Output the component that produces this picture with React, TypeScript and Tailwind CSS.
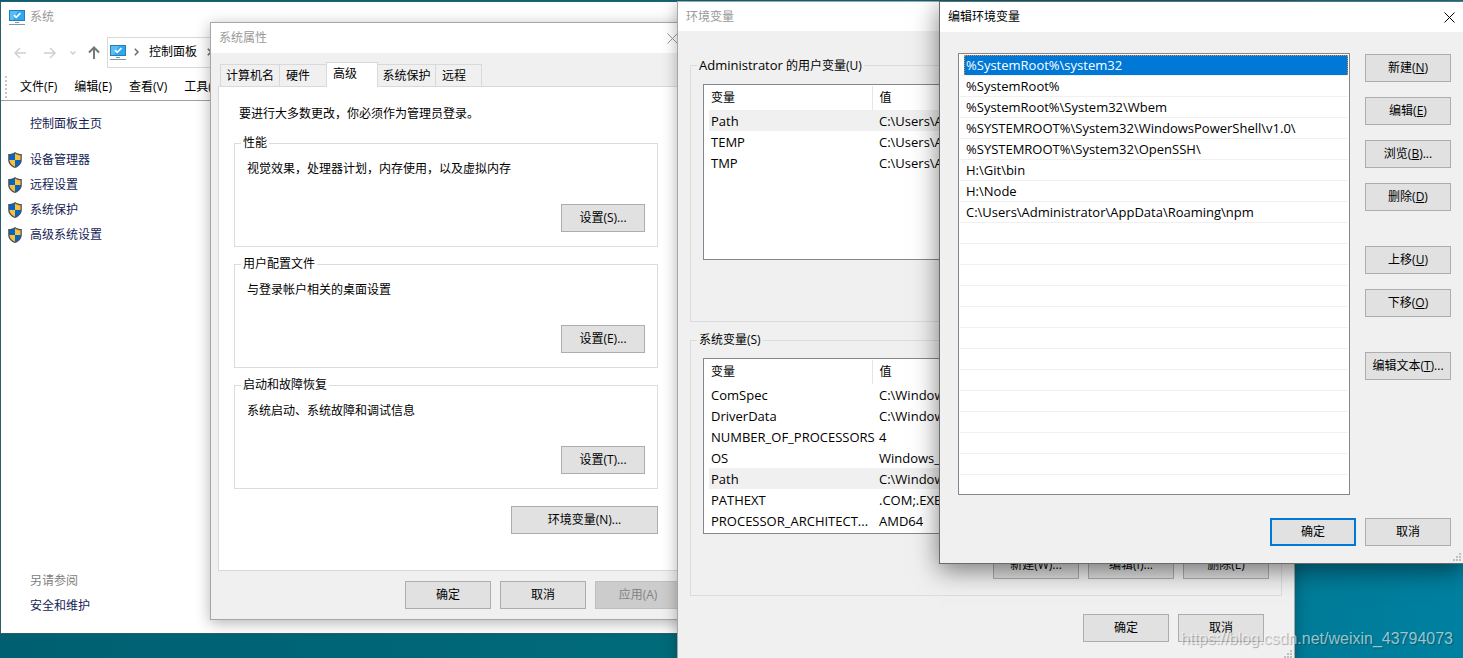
import React from 'react';

interface Variable {
  name: string;
  value: string;
  selected?: boolean;
}

const userVariables: Variable[] = [
  { name: 'Path', value: 'C:\\Users\\Administrator\\AppData', selected: true },
  { name: 'TEMP', value: 'C:\\Users\\Administrator\\AppData' },
  { name: 'TMP', value: 'C:\\Users\\Administrator\\AppData' },
];

const systemVariables: Variable[] = [
  { name: 'ComSpec', value: 'C:\\Windows\\system32\\cmd.exe' },
  { name: 'DriverData', value: 'C:\\Windows\\System32\\Drivers' },
  { name: 'NUMBER_OF_PROCESSORS', value: '4' },
  { name: 'OS', value: 'Windows_NT' },
  { name: 'Path', value: 'C:\\Windows\\system32', selected: true },
  { name: 'PATHEXT', value: '.COM;.EXE;.BAT;.CMD' },
  { name: 'PROCESSOR_ARCHITECT...', value: 'AMD64' },
];

const pathEntries = [
  '%SystemRoot%\\system32',
  '%SystemRoot%',
  '%SystemRoot%\\System32\\Wbem',
  '%SYSTEMROOT%\\System32\\WindowsPowerShell\\v1.0\\',
  '%SYSTEMROOT%\\System32\\OpenSSH\\',
  'H:\\Git\\bin',
  'H:\\Node',
  'C:\\Users\\Administrator\\AppData\\Roaming\\npm',
];

const emptyRows = Array.from({ length: 12 }, (_, i) => i);

const sideLinks = ['设备管理器', '远程设置', '系统保护', '高级系统设置'];

const settingGroups = [
  { title: '性能', text: '视觉效果，处理器计划，内存使用，以及虚拟内存', button: '设置(S)...' },
  { title: '用户配置文件', text: '与登录帐户相关的桌面设置', button: '设置(E)...' },
  { title: '启动和故障恢复', text: '系统启动、系统故障和调试信息', button: '设置(T)...' },
];

interface WinButtonProps {
  children: React.ReactNode;
  className?: string;
  primary?: boolean;
  disabled?: boolean;
}

const WinButton: React.FC<WinButtonProps> = ({ children, className = 'w-[86px]', primary, disabled }) => {
  const look = disabled
    ? 'border border-[#bfbfbf] bg-[#cccccc] text-[#838383]'
    : primary
      ? 'border-2 border-[#0078d7] bg-[#e1e1e1]'
      : 'border border-[#adadad] bg-[#e1e1e1]';
  return (
    <button type="button" disabled={disabled} className={`h-7 shrink-0 whitespace-nowrap text-center leading-4 ${look} ${className}`}>
      {children}
    </button>
  );
};

const MonitorIcon = () => (
  <svg width="16" height="16" viewBox="0 0 16 16" className="shrink-0">
    <rect x="0.5" y="1.5" width="15" height="10" fill="#2ea8f5" stroke="#2b7cb0" />
    <path d="M1 2h8L4 11H1z" fill="#55bdf8" />
    <path d="M5 6.2l2.2 2.2L11.5 4" fill="none" stroke="#fff" strokeWidth="1.7" />
    <path d="M6 13.500h4" stroke="#7d97a8" />
    <path d="M0 15.500h16" stroke="#8298a8" />
  </svg>
);

const ShieldIcon = () => (
  <svg width="14" height="16" viewBox="0 0 14 16" className="shrink-0">
    <path d="M7 0C5 1.400 3 2 .2 2.100V8c0 3.600 2.700 6.600 6.800 8 4.100-1.400 6.800-4.400 6.800-8V2.100C11 2 9 1.400 7 0z" fill="#4d5258" />
    <path d="M7 1.400C5.300 2.600 3.500 3.100 1.500 3.300V8H7z" fill="#0066cc" />
    <path d="M7 1.400c1.700 1.200 3.500 1.700 5.500 1.900V8H7z" fill="#fdc035" />
    <path d="M1.500 8c.1 3 2.200 5.400 5.500 6.700V8z" fill="#fdc035" />
    <path d="M12.500 8c-.1 3-2.200 5.400-5.500 6.700V8z" fill="#0066cc" />
  </svg>
);

const CloseIcon = () => (
  <svg width="11" height="11" viewBox="0 0 11 11" fill="none" stroke="currentColor">
    <path d="M.5.5l10 10M10.500.5l-10 10" />
  </svg>
);

const Chevron = () => (
  <svg width="5" height="8" viewBox="0 0 5 8" fill="none" stroke="#6b6b6b" strokeWidth="1.5" className="shrink-0">
    <path d="M.8.8L4 4 .8 7.200" />
  </svg>
);

const SizeGrip = () => (
  <svg width="8" height="8" viewBox="0 0 8 8" fill="#bfbfbf" className="absolute bottom-[2px] right-[2px]">
    <path d="M6 0h2v2H6zM3 3h2v2H3zM6 3h2v2H6zM0 6h2v2H0zM3 6h2v2H3zM6 6h2v2H6z" />
  </svg>
);

const SystemWindow = () => (
  <section className="absolute bottom-6 left-0 top-px flex w-[900px] flex-col border border-[#2b5f6b] bg-white">
    <div className="flex h-[30px] items-center gap-[5px] pl-2 text-[#999999]">
      <MonitorIcon />
      <h2>系统</h2>
    </div>

    <div className="mt-[5px] flex h-[31px]">
      <div className="flex w-[106px] shrink-0 items-center pl-[13px]">
        <svg width="12" height="12" viewBox="0 0 12 12" fill="none" stroke="#d0d0d0" strokeWidth="1.5">
          <path d="M12 6H1M6 1L1 6l5 5" />
        </svg>
        <svg width="12" height="12" viewBox="0 0 12 12" fill="none" stroke="#d0d0d0" strokeWidth="1.5" className="ml-[18px]">
          <path d="M0 6h11M6 1l5 5-5 5" />
        </svg>
        <svg width="6" height="4" viewBox="0 0 6 4" fill="none" stroke="#d0d0d0" strokeWidth="1.5" className="ml-[14px]">
          <path d="M.5.5L3 3 5.500.5" />
        </svg>
        <svg width="12" height="13" viewBox="0 0 12 13" fill="none" stroke="#777777" strokeWidth="2" className="ml-[12px]">
          <path d="M6 13V2M1 6.500l5-5 5 5" />
        </svg>
      </div>
      <div className="flex grow items-center border border-[#d9d9d9] pb-[2px] pl-[2px]">
        <MonitorIcon />
        <span className="ml-2"><Chevron /></span>
        <span className="ml-[10px] mr-[10px]">控制面板</span>
        <Chevron />
      </div>
    </div>

    <nav className="flex h-[33px] items-center border-b border-[#a0a0a0] pl-1 pt-[6px]">
      <span className="h-[22px] border-l-2 border-dotted border-[#c8c8c8]" />
      <div className="ml-[13px] flex gap-[17px]">
        <button type="button">文件(F)</button>
        <button type="button">编辑(E)</button>
        <button type="button">查看(V)</button>
        <button type="button">工具(T)</button>
      </div>
    </nav>

    <aside className="flex grow flex-col pb-[19px] pl-[7px] pt-[15px] text-[#151c55]">
      <a href="#home" className="pl-[22px]">控制面板主页</a>
      <ul className="mt-5 flex flex-col gap-[9px]">
        {sideLinks.map((label) => (
          <li key={label} className="flex items-center gap-2">
            <ShieldIcon />
            <a href="#side">{label}</a>
          </li>
        ))}
      </ul>
      <div className="mt-auto flex flex-col gap-[9px] pl-[22px]">
        <span className="text-[#808080]">另请参阅</span>
        <a href="#security">安全和维护</a>
      </div>
    </aside>
  </section>
);

const PropertiesWindow = () => (
  <section className="absolute left-[210px] top-[22px] w-[479px] border border-[#a6a6a6] bg-[#f0f0f0] shadow-[0_3px_14px_rgba(0,0,0,0.3)]">
    <div className="flex h-[30px] items-center bg-white pl-2 text-[#999999]">
      <h2>系统属性</h2>
      <button type="button" aria-label="关闭" className="ml-auto mr-[10px]">
        <CloseIcon />
      </button>
    </div>

    <div className="px-[7px] pb-[10px] pt-[9px]">
      <div className="flex items-end pl-[2px]" role="tablist">
        <button type="button" role="tab" className="h-[22px] w-[60px] border border-b-0 border-[#d9d9d9]">计算机名</button>
        <button type="button" role="tab" className="h-[22px] w-[46px] border-t border-[#d9d9d9] pl-[6px] text-left">硬件</button>
        <button type="button" role="tab" aria-selected="true" className="-mb-px h-[25px] w-[52px] border border-b-0 border-[#d9d9d9] bg-white pb-[2px] pl-[6px] text-left">高级</button>
        <button type="button" role="tab" className="h-[22px] w-[58px] border-r border-t border-[#d9d9d9]">系统保护</button>
        <button type="button" role="tab" className="h-[22px] w-[46px] border-r border-t border-[#d9d9d9] pl-[6px] text-left">远程</button>
      </div>

      <div className="border border-[#d9d9d9] bg-white pb-9 pl-[15px] pr-[22px] pt-[19px]">
        <p className="ml-[5px]">要进行大多数更改，你必须作为管理员登录。</p>
        <div className="mt-[13px] flex flex-col gap-[9px]">
          {settingGroups.map((group) => (
            <fieldset key={group.title} className="border border-[#dcdcdc] pb-[14px] pr-3">
              <legend className="ml-[6px] px-[2px]">{group.title}</legend>
              <p className="pl-3 pt-[10px]">{group.text}</p>
              <div className="mt-[27px] flex justify-end">
                <WinButton className="w-[84px]">{group.button}</WinButton>
              </div>
            </fieldset>
          ))}
        </div>
        <div className="mt-[17px] flex justify-end">
          <WinButton className="w-[147px]">环境变量(N)...</WinButton>
        </div>
      </div>

      <div className="mt-[10px] flex justify-end gap-[9px]">
        <WinButton>确定</WinButton>
        <WinButton>取消</WinButton>
        <WinButton disabled>应用(A)</WinButton>
      </div>
    </div>
  </section>
);

const VariableTable: React.FC<{ rows: Variable[] }> = ({ rows }) => (
  <div className="h-[176px] overflow-hidden border border-[#828790] bg-white pl-[5px] pt-px">
    <table className="w-full table-fixed border-collapse">
      <thead>
        <tr className="h-[24px]">
          <th className="w-[163px] border-r border-[#e5e5e5] p-0 pl-[2px] text-left font-normal">变量</th>
          <th className="p-0 pl-[7px] text-left font-normal">值</th>
        </tr>
      </thead>
      <tbody className="text-[13px]">
        {rows.map((row) => (
          <tr key={row.name} className={row.selected ? 'h-[21px] bg-[#f0f0f0]' : 'h-[21px]'}>
            <td className="whitespace-nowrap p-0 pl-[2px]">{row.name}</td>
            <td className="whitespace-nowrap p-0 pl-[7px]">{row.value}</td>
          </tr>
        ))}
      </tbody>
    </table>
  </div>
);

const VariablesWindow = () => (
  <section className="absolute left-[677px] top-px w-[618px] border border-[#a6a6a6] bg-[#f0f0f0] shadow-[0_3px_14px_rgba(0,0,0,0.3)]">
    <div className="flex h-[29px] items-center bg-white pl-2 text-[#999999]">
      <h2>环境变量</h2>
    </div>

    <div className="px-3 pb-[18px] pt-[26px]">
      <fieldset className="border border-[#dcdcdc] px-3 pb-[18px]">
        <legend className="-ml-[6px] px-[2px]">
          <span className="text-[13px]">Administrator</span> 的用户变量(U)
        </legend>
        <div className="pt-[10px]">
          <VariableTable rows={userVariables} />
        </div>
        <div className="mt-[15px] flex justify-end gap-[9px]">
          <WinButton>新建(N)...</WinButton>
          <WinButton>编辑(E)...</WinButton>
          <WinButton>删除(D)</WinButton>
        </div>
      </fieldset>

      <fieldset className="mt-[10px] border border-[#dcdcdc] px-3 pb-4">
        <legend className="-ml-[6px] px-[2px]">系统变量(S)</legend>
        <div className="pt-[10px]">
          <VariableTable rows={systemVariables} />
        </div>
        <div className="mt-[17px] flex justify-end gap-[9px]">
          <WinButton>新建(W)...</WinButton>
          <WinButton>编辑(I)...</WinButton>
          <WinButton>删除(L)</WinButton>
        </div>
      </fieldset>

      <div className="mt-[18px] flex justify-end gap-[9px] pr-[18px]">
        <WinButton>确定</WinButton>
        <WinButton>取消</WinButton>
      </div>
    </div>
    <SizeGrip />
  </section>
);

const EditWindow = () => (
  <section className="absolute left-[939px] top-px w-[525px] border border-[#6b6b6b] bg-[#f0f0f0] shadow-[0_6px_24px_rgba(0,0,0,0.5)]">
    <div className="flex h-[30px] items-center bg-white pl-2">
      <h2>编辑环境变量</h2>
      <button type="button" aria-label="关闭" className="ml-auto mr-2">
        <CloseIcon />
      </button>
    </div>

    <div className="pb-[17px] pl-[18px] pr-3 pt-[21px]">
      <div className="flex gap-[15px]">
        <ul className="h-[442px] grow overflow-hidden border border-[#828790] bg-white p-px text-[13px]">
          {pathEntries.map((entry, i) => (
            <li key={entry} className="flex h-[21px] border-b border-[#f0f0f0] pl-1">
              <span
                className={
                  i === 0
                    ? 'flex grow items-center border border-b-0 border-dotted border-[#ff8728] bg-[#0078d7] pb-px pl-px text-white'
                    : 'flex grow items-center pl-[2px]'
                }
              >
                {entry}
              </span>
            </li>
          ))}
          {emptyRows.map((row) => (
            <li key={row} className="h-[21px] border-b border-[#f0f0f0]" />
          ))}
        </ul>

        <div className="flex flex-col gap-[15px] pt-px">
          <WinButton>新建(<u>N</u>)</WinButton>
          <WinButton>编辑(<u>E</u>)</WinButton>
          <WinButton>浏览(<u>B</u>)...</WinButton>
          <WinButton>删除(<u>D</u>)</WinButton>
          <div className="mt-5 flex flex-col gap-[15px]">
            <WinButton>上移(<u>U</u>)</WinButton>
            <WinButton>下移(<u>O</u>)</WinButton>
          </div>
          <div className="mt-5">
            <WinButton>编辑文本(<u>T</u>)...</WinButton>
          </div>
        </div>
      </div>

      <div className="mt-[23px] flex justify-end gap-[9px]">
        <WinButton primary>确定</WinButton>
        <WinButton>取消</WinButton>
      </div>
    </div>
    <SizeGrip />
  </section>
);

const App: React.FC = () => {
  return (
    <main className="relative h-screen overflow-hidden bg-linear-to-r from-[#006072] via-[#006b7c] to-[#0080a0] font-['Open_Sans','Noto_Sans_CJK_SC',sans-serif] text-[12px] leading-4 text-black">
      <SystemWindow />
      <PropertiesWindow />
      <VariablesWindow />
      <EditWindow />
      <p className="absolute bottom-[9px] right-[10px] font-['Liberation_Sans',sans-serif] text-[16px] leading-5 text-white/60 [text-shadow:1px_1px_1px_rgba(0,0,0,0.3)]">
        https://blog.csdn.net/weixin_43794073
      </p>
    </main>
  );
};

export default App;
